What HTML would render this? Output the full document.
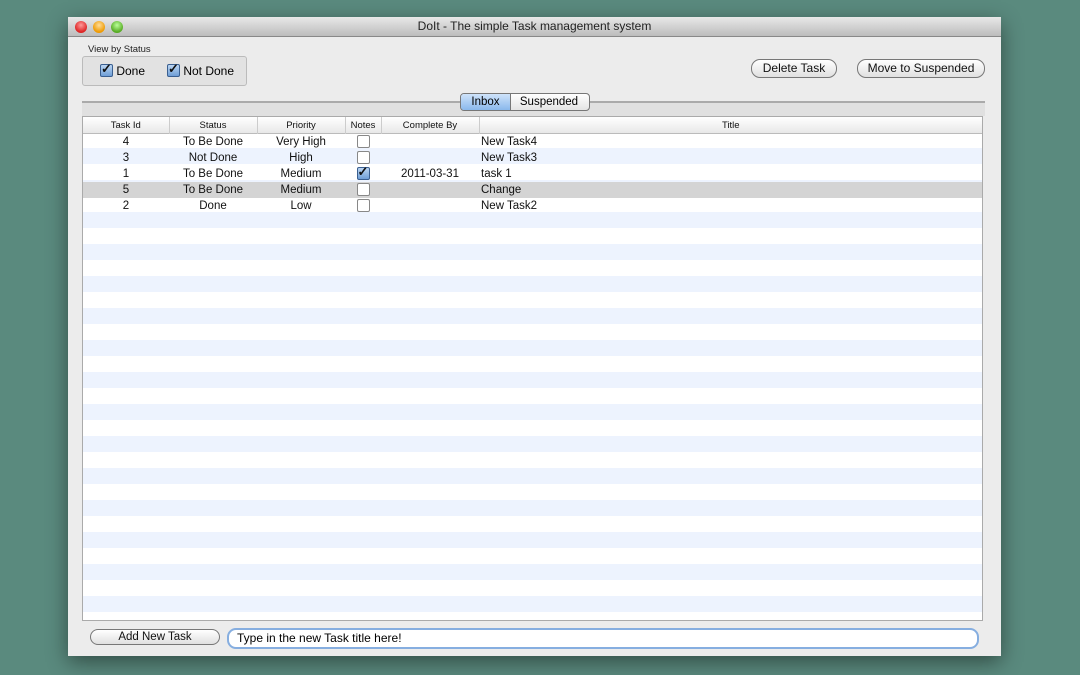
<!DOCTYPE html><html><head><style>
body{margin:0;width:1080px;height:675px;background:#5a8a7e;font-family:"Liberation Sans",sans-serif;position:relative;overflow:hidden}
.win{position:absolute;left:68px;top:17px;width:933px;height:639px;background:#ececec;box-shadow:0 6px 20px rgba(0,0,0,.45)}
.tb{height:19px;background:linear-gradient(#e8e8e8,#bcbcbc);border-bottom:1px solid #888;text-align:center;font-size:12px;line-height:19px;color:#222}
.dot{position:absolute;top:4px;width:12px;height:12px;border-radius:50%}
.a{position:absolute}
.cb{display:inline-block;width:11px;height:11px;border:1px solid #888;border-radius:2px;background:#fff;vertical-align:-2px}
.cbc{background:linear-gradient(#bcd6f2,#6e9ed6);border-color:#3a5f90;position:relative}
.cbc:after{content:"✓";position:absolute;left:0;top:-4px;font-size:13px;font-weight:bold;color:#111}
.btn{position:absolute;height:17px;border:1px solid #777;border-radius:9px;background:linear-gradient(#fff,#e0e0e0);font-size:12px;text-align:center;line-height:17px;color:#111}
table{border-collapse:collapse;font-size:11.5px;color:#111;table-layout:fixed}
td{height:16px;padding:0;text-align:center;overflow:hidden;white-space:nowrap}
</style></head><body>
<div class="win">
<div class="tb">DoIt - The simple Task management system</div>
<div class="dot" style="left:7px;background:radial-gradient(circle at 50% 35%,#f99,#d22 70%)"></div>
<div class="dot" style="left:25px;background:radial-gradient(circle at 50% 35%,#fd9,#e90 70%)"></div>
<div class="dot" style="left:43px;background:radial-gradient(circle at 50% 35%,#bf9,#5a2 70%)"></div>
<div class="a" style="left:20px;top:27px;font-size:9.5px;color:#222">View by Status</div>
<div class="a" style="left:14px;top:39px;width:163px;height:28px;border:1px solid #bbb;border-radius:3px;background:#e2e2e2"></div>
<div class="a" style="left:32px;top:47px;font-size:12px"><span class="cb cbc"></span> Done</div>
<div class="a" style="left:99px;top:47px;font-size:12px"><span class="cb cbc"></span> Not Done</div>
<div class="btn" style="left:683px;top:42px;width:84px">Delete Task</div>
<div class="btn" style="left:789px;top:42px;width:126px">Move to Suspended</div>
<div class="a" style="left:14px;top:84px;width:903px;height:2px;background:#aaa"></div>
<div class="a" style="left:14px;top:86px;width:903px;height:13px;background:#e0e0e0"></div>
<div class="a" style="left:392px;top:76px;width:128px;height:16px;border:1px solid #777;border-radius:4px;background:linear-gradient(#fff,#e4e4e4);font-size:11.5px;line-height:16px">
<span style="display:inline-block;width:49px;height:16px;text-align:center;background:linear-gradient(#cfe3fa,#8ab8ec);border-right:1px solid #777;border-radius:3px 0 0 3px">Inbox</span><span style="display:inline-block;width:76px;text-align:center">Suspended</span></div>
<div class="a" style="left:14px;top:99px;width:899px;height:503px;border:1px solid #aaa;background:repeating-linear-gradient(#fff 0 16px,#edf3fe 16px 32px) 0 15px/100% 100% no-repeat,#fff;overflow:hidden">
<table style="width:899px">
<colgroup><col style="width:86px"><col style="width:88px"><col style="width:88px"><col style="width:36px"><col style="width:98px"><col></colgroup>
<tr style="font-size:9.5px;background:linear-gradient(#fff,#e8e8e8);border-bottom:1px solid #bbb"><td style="height:14px;border-right:1px solid #ccc">Task Id</td><td style="border-right:1px solid #ccc">Status</td><td style="border-right:1px solid #ccc">Priority</td><td style="border-right:1px solid #ccc">Notes</td><td style="border-right:1px solid #ccc">Complete By</td><td>Title</td></tr>
<tr><td>4</td><td>To Be Done</td><td>Very High</td><td><span class="cb"></span></td><td></td><td style="text-align:left;padding-left:2px">New Task4</td></tr>
<tr><td>3</td><td>Not Done</td><td>High</td><td><span class="cb"></span></td><td></td><td style="text-align:left;padding-left:2px">New Task3</td></tr>
<tr><td>1</td><td>To Be Done</td><td>Medium</td><td><span class="cb cbc"></span></td><td>2011-03-31</td><td style="text-align:left;padding-left:2px">task 1</td></tr>
<tr style="background:#d4d4d4"><td>5</td><td>To Be Done</td><td>Medium</td><td><span class="cb"></span></td><td></td><td style="text-align:left;padding-left:2px">Change</td></tr>
<tr><td>2</td><td>Done</td><td>Low</td><td><span class="cb"></span></td><td></td><td style="text-align:left;padding-left:2px">New Task2</td></tr>
</table></div>
<div class="btn" style="left:22px;top:612px;width:128px;height:14px;line-height:14px;font-size:11.5px">Add New Task</div>
<div class="a" style="left:159px;top:611px;width:740px;height:17px;border:2px solid #86aee0;border-radius:9px;background:#fff;font-size:12px;line-height:17px;padding-left:8px">Type in the new Task title here!</div>
</div>
</body></html>
